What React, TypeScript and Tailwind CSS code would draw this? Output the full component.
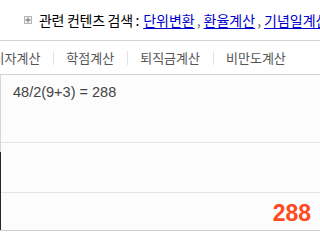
import React from "react";

const kr = { fontFamily: '"Noto Sans CJK KR", "Noto Sans", sans-serif' };

const tabs = ["이자계산", "학점계산", "퇴직금계산", "비만도계산"];
const links = ["단위변환", "환율계산", "기념일계산"];

function PlusBox() {
  return (
    <span className="inline-flex h-[8px] w-[8px] items-center justify-center border border-[#b5b5b5] bg-[#f2f2f2]">
      <svg width="6" height="6" viewBox="0 0 6 6">
        <path d="M3 0.5v5M0.5 3h5" stroke="#8a8a8a" strokeWidth="1.4" />
      </svg>
    </span>
  );
}

export default function App() {
  return (
    <div className="h-[238px] w-[320px] overflow-hidden bg-white" style={kr}>
      {/* related content search */}
      <div className="flex h-[40px] items-center whitespace-nowrap pl-[24px] text-[14px] leading-none text-black">
        <PlusBox />
        <span className="ml-[7px] tracking-[-0.3px]">관련 컨텐츠 검색 :</span>
        {links.map((l, i) => (
          <React.Fragment key={l}>
            {i > 0 && <span className="ml-[2px] mr-[3px] text-[#666]">,</span>}
            <a className={"text-[#0000cc] underline underline-offset-2 " + (i === 0 ? "ml-[4px]" : "")}>{l}</a>
          </React.Fragment>
        ))}
      </div>

      {/* tabs */}
      <div className="flex h-[35px] items-center overflow-hidden whitespace-nowrap border-y border-[#d4d4d4] text-[13px] leading-none text-[#555]">
        <div className="-ml-[20px] flex items-center">
          {tabs.map((t, i) => (
            <React.Fragment key={t}>
              {i > 0 && <span className="h-[14px] w-px bg-[#e2e2e2]" />}
              <span className="px-[12.5px]">{t}</span>
            </React.Fragment>
          ))}
        </div>
      </div>

      {/* calculator display */}
      <div className="flex h-[156px] border-b border-[#d0d0d0]">
        <div className="flex w-px flex-col">
          <div className="h-[77px] bg-[#d6d6d6]" />
          <div className="flex-1 bg-[#222733]" />
        </div>
        <div className="flex flex-1 flex-col bg-[#fcfcfc]">
          <div className="h-[68px] border-b border-[#e4e4e4] pl-[12px] pt-[7px] font-['Liberation_Sans',Arial,sans-serif] text-[14.5px] text-[#444]">
            48/2(9+3) = 288
          </div>
          <div className="h-[50px] border-b border-[#e4e4e4]" />
          <div className="flex flex-1 items-center justify-end pr-[9px] pt-[3px] font-['Liberation_Sans',Arial,sans-serif] text-[23px] font-bold text-[#ff4a1f]">
            288
          </div>
        </div>
      </div>
    </div>
  );
}
